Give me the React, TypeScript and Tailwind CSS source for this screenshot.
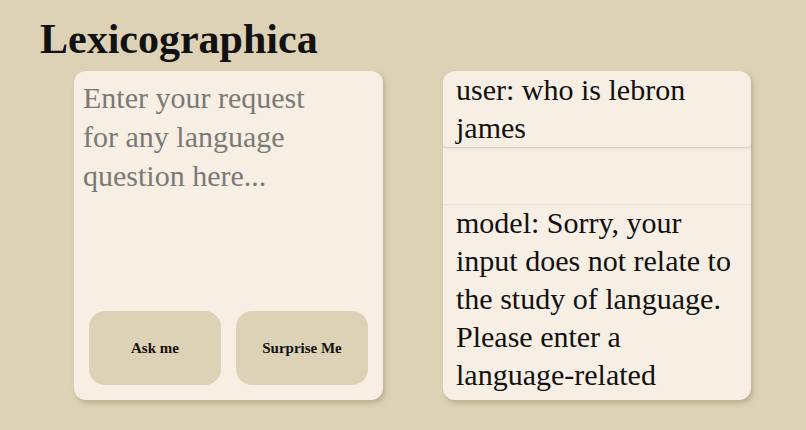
import React from 'react';

const serif = { fontFamily: '"Liberation Serif", "DejaVu Serif", serif' };

const messages = [
  { role: 'user', text: 'who is lebron james' },
  { role: 'model', text: 'Sorry, your input does not relate to the study of language. Please enter a language-related question.' },
];

const App = () => {
  return (
    <div className="w-[806px] h-[430px] bg-[#ddd2b5] overflow-hidden text-[#111]" style={serif}>
      <h1 className="pt-[18px] pl-[40px] text-[42px] leading-[42px] font-bold">Lexicographica</h1>

      <div className="flex gap-[60px] ml-[74px] mt-[11px]">
        {/* Prompt card */}
        <div className="w-[309px] h-[329px] bg-[#f7eee4] rounded-xl shadow-[2px_3px_5px_rgba(120,105,70,0.35)] flex flex-col">
          <textarea
            className="flex-1 w-[250px] pt-[7px] pl-[9px] bg-transparent resize-none outline-none text-[30px] leading-[39px] placeholder:text-[#7b7976] overflow-hidden"
            placeholder="Enter your request for any language question here..."
          />
          <div className="flex gap-[15px] px-[15px] pb-[15px]">
            <button className="w-[132px] h-[74px] rounded-2xl bg-[#ddd2b5] text-[15px] font-bold">Ask me</button>
            <button className="w-[132px] h-[74px] rounded-2xl bg-[#ddd2b5] text-[15px] font-bold">Surprise Me</button>
          </div>
        </div>

        {/* Conversation card */}
        <div className="w-[308px] h-[329px] bg-[#f7eee4] rounded-xl shadow-[2px_3px_5px_rgba(120,105,70,0.35)] overflow-hidden flex flex-col">
          <div className="px-[13px] text-[30px] leading-[38px] rounded-b-sm shadow-[0_1px_2px_rgba(120,105,70,0.3)]">
            {messages[0].role}: {messages[0].text}
          </div>
          <div className="h-[57px] shrink-0 shadow-[0_1px_1px_rgba(120,105,70,0.08)]" />
          <div className="px-[13px] text-[30px] leading-[38px]">
            {messages[1].role}: {messages[1].text}
          </div>
        </div>
      </div>
    </div>
  );
};

export default App;
